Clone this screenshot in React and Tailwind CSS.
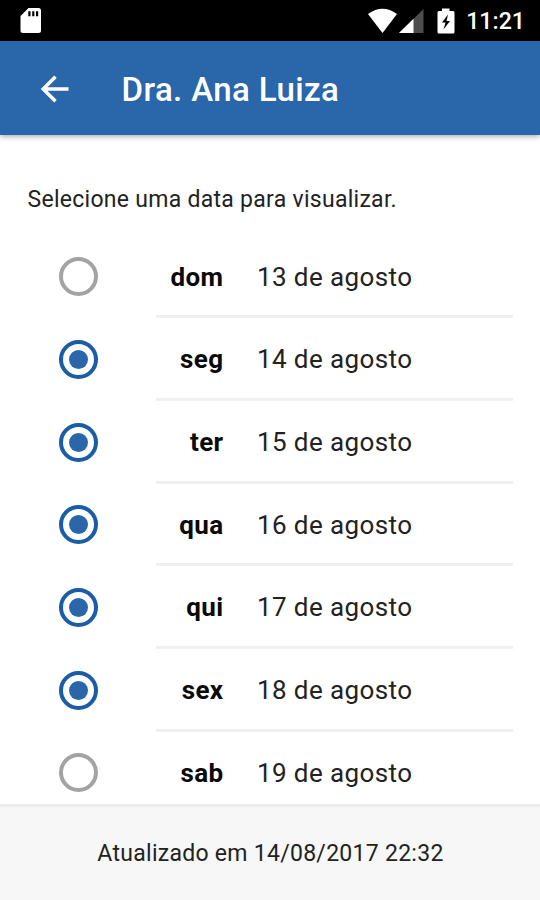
import clsx from "clsx"

const days = [
  { id: "dom", date: "13 de agosto", available: false },
  { id: "seg", date: "14 de agosto", available: true },
  { id: "ter", date: "15 de agosto", available: true },
  { id: "qua", date: "16 de agosto", available: true },
  { id: "qui", date: "17 de agosto", available: true },
  { id: "sex", date: "18 de agosto", available: true },
  { id: "sab", date: "19 de agosto", available: false },
]

function StatusBar() {
  return (
    <div className="flex h-[41px] shrink-0 items-center bg-black pl-5 pr-[15px] text-white">
      <svg width="22" height="27" viewBox="0 0 22 27" className="shrink-0">
        <path
          d="M8.500 1H18.500Q21 1 21 3.500V23.500Q21 26 18.500 26H3Q.5 26 .5 23.500V9Z"
          fill="currentColor"
        />
        <path d="M8.300 4.200h2.200v5H8.300zM12.200 4.200h2.200v5h-2.200zM16 4.200h2.200v5H16z" fill="#000" />
      </svg>
      <svg width="29" height="26" viewBox="0 0 29 26" className="ml-auto shrink-0">
        <path d="M0 6Q14.500 -4.500 29 6L14.500 25Z" fill="currentColor" />
      </svg>
      <svg width="25" height="26" viewBox="0 0 25 26" className="ml-[2px] shrink-0">
        <path d="M24.500 1V25H0Z" fill="#4d4d4d" />
        <path d="M14.500 10.800V25H0Z" fill="currentColor" />
      </svg>
      <svg width="18" height="26" viewBox="0 0 18 26" className="ml-[13px] shrink-0">
        <path
          d="M5 .5h7.500V3H16q1.500 0 1.500 1.500V24q0 1.500-1.500 1.500H2Q.5 25.500.5 24V4.500Q.5 3 2 3H5Z"
          fill="currentColor"
        />
        <path d="M11 6.500 5 14.500h3.500L6.500 21.500 13 13H9.500Z" fill="#000" />
      </svg>
      <span className="ml-[11px] pt-[3px] text-[23.200px] font-medium leading-none">11:21</span>
    </div>
  )
}

function Header({ title }) {
  return (
    <header className="z-10 flex h-[94px] shrink-0 items-center bg-[#2a66aa] pl-10 pt-[2px] text-white shadow-[0_1px_6px_rgba(0,0,0,0.4)]">
      <button aria-label="Voltar">
        <svg width="30" height="28" viewBox="0 0 30 28" fill="none" stroke="currentColor" strokeWidth="3.500">
          <path d="M28.500 14H3.500M15.500 1.700 3.200 14l12.300 12.300" />
        </svg>
      </button>
      <h1 className="ml-[51.500px] text-[33px] font-medium leading-none tracking-[0.4px]">{title}</h1>
    </header>
  )
}

function DayRow({ day, last }) {
  return (
    <li className="flex h-[82.700px] shrink-0 items-stretch">
      <div className="flex w-[156px] shrink-0 items-center pl-[58.500px]">
        <span
          className={clsx(
            "flex size-[39px] items-center justify-center rounded-full border-4",
            day.available ? "border-[#1a5ca5]" : "border-[#a3a3a3]"
          )}
        >
          {day.available && <span className="size-[19px] rounded-full bg-[#2a66aa]" />}
        </span>
      </div>
      <div
        className={clsx(
          "flex w-[357px] items-center border-b-[3px] pt-[2.500px] text-[26px] leading-none tracking-[0.400px]",
          last ? "border-transparent" : "border-[#f0f0f0]"
        )}
      >
        <span className="w-[67.500px] text-right font-bold text-[#0a0a0a]">{day.id}</span>
        <span className="ml-[33.500px] text-[#222]">{day.date}</span>
      </div>
    </li>
  )
}

export default function App() {
  return (
    <div className="flex h-[900px] w-[540px] flex-col overflow-hidden bg-white font-[Roboto,sans-serif]">
      <StatusBar />
      <Header title="Dra. Ana Luiza" />
      <main className="min-h-0 flex-1 overflow-hidden">
        <p className="flex h-[100.500px] items-end pb-[22px] pl-[27.500px] text-[23px] leading-7 tracking-[0.280px] text-[#222]">
          Selecione uma data para visualizar.
        </p>
        <ul>
          {days.map((day, i) => (
            <DayRow key={day.id} day={day} last={i === days.length - 1} />
          ))}
        </ul>
      </main>
      <footer className="flex h-[96px] shrink-0 items-center justify-center border-t-[3px] border-[#ededed] bg-[#f7f7f7] pt-[2px] pl-px text-[23px] tracking-[0.280px] text-[#222]">
        Atualizado em 14/08/2017 22:32
      </footer>
    </div>
  )
}
